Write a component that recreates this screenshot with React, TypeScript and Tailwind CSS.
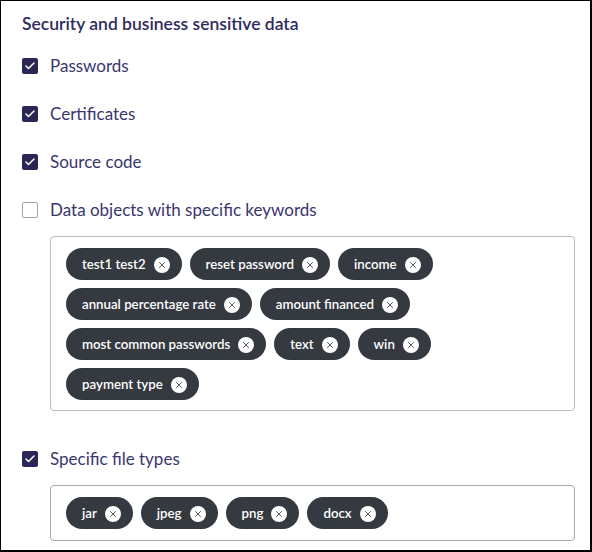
import { Check, X } from "lucide-react";

const keywords = [
  "test1 test2",
  "reset password",
  "income",
  "annual percentage rate",
  "amount financed",
  "most common passwords",
  "text",
  "win",
  "payment type",
];

const fileTypes = ["jar", "jpeg", "png", "docx"];

function Checkbox({ checked }: { checked: boolean }) {
  if (checked) {
    return (
      <span className="flex h-4 w-4 shrink-0 items-center justify-center rounded-[2px] bg-[#2a2656]">
        <Check className="h-3 w-3 text-white" strokeWidth={3} />
      </span>
    );
  }
  return <span className="h-4 w-4 shrink-0 rounded-[2px] border border-[#a3a3a3] bg-white" />;
}

function Option({ label, checked }: { label: string; checked: boolean }) {
  return (
    <label className="flex h-6 items-center gap-3">
      <Checkbox checked={checked} />
      <span className="text-[17px] leading-6 text-[#3a366d]">{label}</span>
    </label>
  );
}

function Chip({ text }: { text: string }) {
  return (
    <span className="flex h-8 items-center gap-2 rounded-full bg-[#343a40] pl-4 pr-3 pt-px text-[13.25px] font-semibold text-white">
      {text}
      <span className="flex h-4 w-4 items-center justify-center rounded-full bg-white">
        <X className="h-[10px] w-[10px] text-[#343a40]" strokeWidth={2} />
      </span>
    </span>
  );
}

export default function App() {
  return (
    <div
      className="h-[552px] w-[592px] border-b-2 border-l border-r-2 border-t border-black bg-white pl-[21px] pt-[11px]"
      style={{ fontFamily: "Lato, 'Open Sans', sans-serif" }}
    >
      <h2 className="text-[17.5px] font-semibold leading-6 text-[#2e2b5f]">
        Security and business sensitive data
      </h2>

      <div className="mt-[18px] flex flex-col gap-6">
        <Option label="Passwords" checked />
        <Option label="Certificates" checked />
        <Option label="Source code" checked />
        <Option label="Data objects with specific keywords" checked={false} />
      </div>

      <div className="ml-7 mt-[14px] w-[525px] rounded-[4px] border border-[#bdbdbd] pb-[10px] pl-[15px] pr-3 pt-[11px]">
        <div className="flex flex-wrap gap-2">
          {keywords.map((k) => (
            <Chip key={k} text={k} />
          ))}
        </div>
      </div>

      <div className="mt-9">
        <Option label="Specific file types" checked />
      </div>

      <div className="ml-7 mt-[14px] w-[525px] rounded-[4px] border border-[#a9a9a9] py-[11px] pl-[15px] pr-3">
        <div className="flex flex-wrap gap-2">
          {fileTypes.map((f) => (
            <Chip key={f} text={f} />
          ))}
        </div>
      </div>
    </div>
  );
}
